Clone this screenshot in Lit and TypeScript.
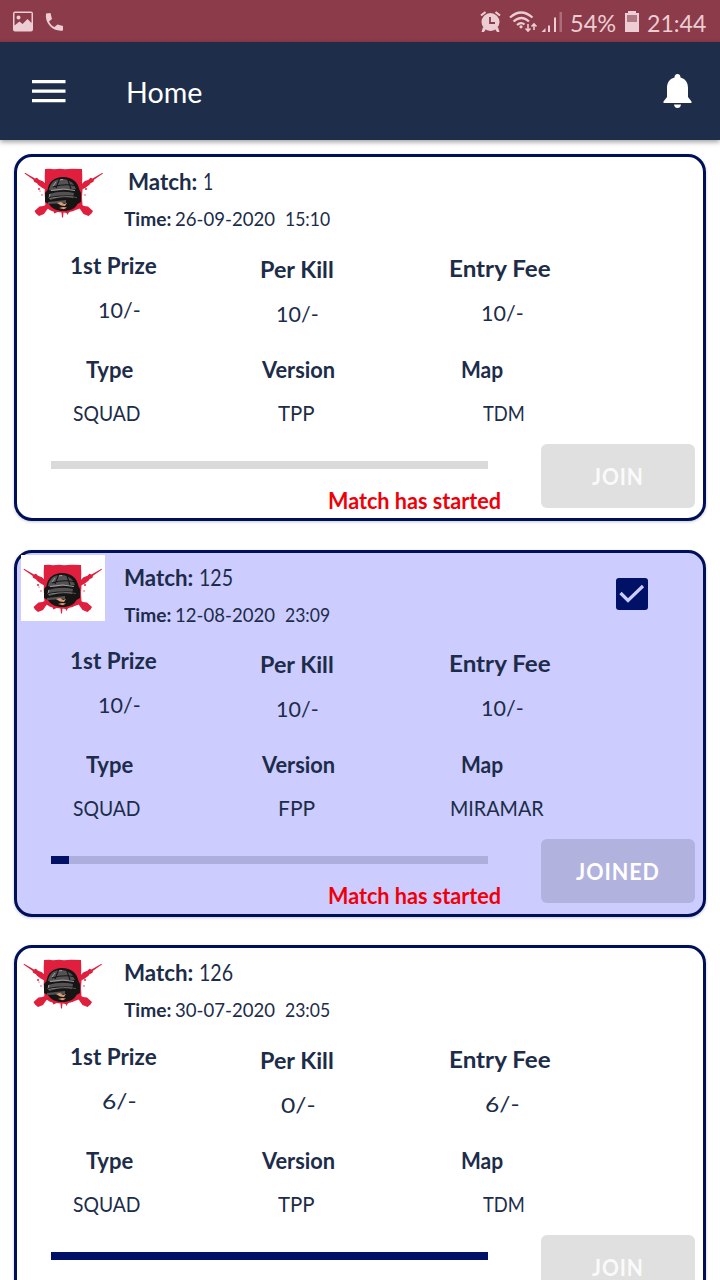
import { LitElement, html, css, svg } from "lit";
import { customElement, property } from "lit/decorators.js";
import { classMap } from "lit/directives/class-map.js";

/** A single line of text, condensed or widened to occupy a given width. */
@customElement("fit-text")
class FitText extends LitElement {
  @property({ type: Number }) w = 0;
  @property() text = "";
  static styles = css`
    :host { display: inline-block; white-space: pre; flex: none; }
    .line { display: inline-block; transform-origin: 0 50%; }
  `;
  updated() {
    const el = this.renderRoot.querySelector(".line") as HTMLElement;
    this.style.width = this.w + "px";
    el.style.transform = `scaleX(${this.w / el.offsetWidth})`;
  }
  render() {
    return html`<span class="line">${this.text}</span>`;
  }
}

const t = (text: string, w: number) => html`<fit-text .text=${text} .w=${w}></fit-text>`;

const rifle = svg`
  <path d="M2.500 14.500L3 13.800 13 19.500l2-.8 2 2 4 1.500 4 4v5l-5-2.500-4-3-1-1.500-3-1.500-.5-2zM58 45l4 2 4 .5 5 4.500-1.500 2.500-3 2.500-5-2-3.500-5-4-3z"/>`;

const logo = html`<svg class="logo" viewBox="0 0 84 66">
  <g fill="#df1f3d">
    <path d="M23 10l5-.3 4 .5 6-.5 5 .5 7-.5 10 .3.3 9-.3 6 .5 6-.5 7 .5 9-4 3-3 1-2 1-4 1-1 1-1 2-1-2-3-.5-.5 5h-1l-.5-5-4-.5-3 1.500-1-2-3-1-5-3.500-.5-8.500-.3-5 .3-9-.3-7z"/>
    ${rifle}
    <g transform="translate(83.500 0) scale(-1 1)">${rifle}</g>
    <circle cx="17" cy="30" r="1"/><circle cx="18" cy="32" r=".6"/><circle cx="64" cy="30" r="1"/>
    <circle cx="63" cy="36" r=".7"/><circle cx="65" cy="25" r=".6"/><circle cx="20" cy="36" r=".7"/>
  </g>
  <path fill="#171414" d="M41 18c9 0 15 5 16.500 13l1.500 3v9l-3.500 2c-2 4.500-7.500 7-14 7s-12-2.500-14.500-7L23 43v-9l2.500-3c1-8 7-13 15.500-13z"/>
  <path fill="#535254" d="M32 22c6-3.500 15-2.500 20 4l2 4-24 2-3-1c.5-4 2.500-7 5-9z"/>
  <path fill="#535254" d="M27 35q13-4 25-1l-1 5q-12-2-23 2zM26 43l18-2v3l-18 1z"/>
  <path fill="none" stroke="#aaa8a8" stroke-width=".9" d="M29 31.500q13-3 24 0M28 35l-1 4 15-2 13 1M34 23l-3 4M37 21l4-.5"/>
  <path fill="none" stroke="#171414" stroke-width="1.100" d="M31 28q12-4 23-1M27 38.500q14-3 28-1M38 19l-4 10M46 21l3 9"/>
  <path fill="#dc9c78" d="M35 44l4-1 3 2 3-1-2 3-4-.5zM37 49l4-1 4 .5-3 1.800z"/>
</svg>`;

interface Field { text: string; w: number; cls: string; }
interface Match {
  id: string; idW: number; date: string; time: string; fields: Field[];
  joined?: boolean; first?: boolean; progress: number; started: boolean;
}

const f = (text: string, w: number, cls: string): Field => ({ text, w, cls });
const labels1 = [f("1st Prize", 87, "b prize"), f("Per Kill", 74, "b kill"), f("Entry Fee", 102, "b fee")];
const labels2 = [f("Type", 47, "b type"), f("Version", 73, "b ver"), f("Map", 42, "b map")];
const tens = [f("10/-", 43, "v1"), f("10/-", 43, "v2"), f("10/-", 43, "v3")];

const matches: Match[] = [
  { id: "1", idW: 10, date: "26-09-2020", time: "15:10", first: true, progress: 0, started: true,
    fields: [...labels1, ...tens, ...labels2, f("SQUAD", 68, "sq"), f("TPP", 37, "pp"), f("TDM", 42, "tdm")] },
  { id: "125", idW: 34, date: "12-08-2020", time: "23:09", joined: true, progress: 4.2, started: true,
    fields: [...labels1, ...tens, ...labels2, f("SQUAD", 68, "sq"), f("FPP", 37, "pp"), f("MIRAMAR", 94, "mir")] },
  { id: "126", idW: 34, date: "30-07-2020", time: "23:05", progress: 100, started: false,
    fields: [...labels1, f("6/-", 34, "v1"), f("0/-", 34, "v2"), f("6/-", 34, "v3"), ...labels2,
      f("SQUAD", 68, "sq"), f("TPP", 37, "pp"), f("TDM", 42, "tdm")] },
];

@customElement("match-card")
class MatchCard extends LitElement {
  @property({ attribute: false }) match!: Match;
  static styles = css`
    :host { display: block; flex: none; }
    .card { box-sizing: border-box; height: 367px; border: 3.500px solid #001058; border-radius: 18px; background: #fff;
      box-shadow: 0 1px 3px rgba(0, 0, 60, .22); color: #1c2c49; display: flex; flex-direction: column; }
    .joined { background: #ccccff; }
    .head { display: flex; flex: none; height: 89.500px; box-sizing: border-box; padding: 2px 55px 0 3.500px; }
    .first .head { padding-left: 4.500px; }
    .pic { width: 84px; height: 66px; flex: none; }
    .joined .pic { background: #fff; }
    .logo { display: block; width: 84px; height: 66px; }
    .info { flex: 1; padding-left: 19.500px; font-weight: 700; }
    .first .info { padding-left: 18.500px; }
    .name { display: flex; gap: 6px; height: 44px; line-height: 44px; font-size: 23px; }
    .first .name { padding-left: 4px; }
    .when { display: flex; height: 30px; line-height: 31px; font-size: 19.500px; }
    .n { font-weight: 400; }
    .date { margin: 0 10px 0 4px; }
    .check { width: 32px; height: 32px; margin-top: 23px; flex: none; }
    .grid { display: grid; flex: none; grid-template-columns: 178.500px 200px 170px; grid-template-rows: 44px 44px 12px 44px 44px; }
    .cell { display: flex; justify-content: center; line-height: 44px; font-size: 21px; }
    .cell:nth-child(n + 4) { grid-row: 2; }
    .cell:nth-child(n + 7) { grid-row: 4; }
    .cell:nth-child(n + 10) { grid-row: 5; }
    .b { font-size: 23px; font-weight: 700; }
    .prize { padding-left: 14px; margin-top: -4px; }
    .kill { padding-left: 2px; }
    .fee { padding-left: 38px; margin-top: -1px; }
    .v1 { padding-left: 26px; margin-top: -3px; }
    .v2 { padding-left: 4px; margin-top: 1px; }
    .v3 { padding-left: 43px; }
    .type { padding-left: 7px; }
    .ver { padding-left: 5px; }
    .map { padding-left: 3px; }
    .sq, .pp { padding-left: 2px; }
    .tdm { padding-left: 47px; }
    .mir { padding-left: 33px; }
    .foot { display: flex; flex: none; justify-content: space-between; padding: 9px 8.500px 0 33.500px; }
    .left { width: 450px; padding-top: 17px; }
    .bar { width: 437px; height: 8px; background: #dadada; }
    .joined .bar { background: #aeaedc; }
    .fill { height: 8px; background: #001166; }
    .msg { display: flex; justify-content: flex-end; height: 40px; line-height: 40px; margin-top: 11px;
      font-size: 23px; font-weight: 700; color: #ef0009; }
    .btn { width: 154px; height: 64px; box-sizing: border-box; border-radius: 6px; background: #e0e0e0; color: #fafafa; line-height: 65px;
      display: flex; justify-content: center; font-size: 22.500px; font-weight: 700; letter-spacing: 1px; }
    .joined .btn { background: #b2b2df; color: #fff; }
  `;
  render() {
    const m = this.match;
    return html`<div class=${classMap({ card: true, joined: !!m.joined, first: !!m.first })}>
      <div class="head">
        <div class="pic">${logo}</div>
        <div class="info">
          <div class="name">${t("Match:", 69)}<span class="n">${t(m.id, m.idW)}</span></div>
          <div class="when">${t("Time:", 47)}<span class="n date">${t(m.date, 100)}</span><span class="n">${t(m.time, 45)}</span></div>
        </div>
        ${m.joined ? html`<svg class="check" viewBox="0 0 32 32"><rect width="32" height="32" rx="3" fill="#001166"/>
          <path d="M4.500 15l7.500 7.500L27 8" fill="none" stroke="#ccccff" stroke-width="3.200"/></svg>` : ""}
      </div>
      <div class="grid">${m.fields.map((x) => html`<div class="cell ${x.cls}">${t(x.text, x.w)}</div>`)}</div>
      <div class="foot">
        <div class="left">
          <div class="bar"><div class="fill" style="width:${m.progress}%"></div></div>
          ${m.started ? html`<div class="msg">${t("Match has started", 173)}</div>` : ""}
        </div>
        <div class="btn">${m.joined ? t("JOINED", 84) : t("JOIN", 52)}</div>
      </div>
    </div>`;
  }
}

@customElement("app-root")
class AppRoot extends LitElement {
  static styles = css`
    :host { display: block; width: 720px; height: 1280px; overflow: hidden; background: #fff; font-family: Lato, sans-serif; }
    .status { height: 42px; box-sizing: border-box; background: #8b3b4a; color: #ebcdd3; display: flex; justify-content: space-between;
      padding: 0 14px 0 12px; font-size: 23.500px; line-height: 47px; }
    .icons { display: block; height: 42px; flex: none; }
    .right { display: flex; }
    .batt { margin: 0 7px 0 8px; }
    .pct { margin-left: 7px; }
    .bar { height: 98px; box-sizing: border-box; background: #1e2e4a; border-top: 1px solid #292943; color: #fff; display: flex; align-items: center;
      padding: 0 28px 2px 32px; box-shadow: 0 2px 5px rgba(0, 0, 0, .38); }
    .menu { width: 34px; height: 24px; }
    .title { flex: 1; padding: 2px 0 0 60px; font-size: 29px; line-height: 40px; }
    .bell { width: 29px; height: 36px; }
    .list { display: flex; flex-direction: column; gap: 28.500px; padding: 14px 14px 0; }
  `;
  render() {
    return html`
      <div class="status">
        <svg class="icons" width="54" height="42" viewBox="12 0 54 42" fill="#ebcdd3">
          <path fill-rule="evenodd" d="M15 11.500h16a2 2 0 0 1 2 2v16a2 2 0 0 1-2 2H15a2 2 0 0 1-2-2v-16a2 2 0 0 1 2-2zM14.500 13v12.500l5-4 3 2.500 5-5 4 4V13zM18.500 15.500a2 2 0 1 1 0 4 2 2 0 0 1 0-4z"/>
          <path d="M46 13.500l4.500-.5 1.500 6-3 2.500c1.500 3 3 4.500 5.500 5.500l3-2.500 5.500 1.500v4.500c-9 1.500-18.500-6-17-17z"/>
        </svg>
        <div class="right">
          <svg class="icons" width="84" height="42" viewBox="480 0 84 42">
            <g fill="#ebcdd3"><circle cx="491.500" cy="22" r="9"/><path d="M484 27l3 2-2 3h-2.500zM499 27l-3 2 2 3h2.500z"/></g>
            <path d="M482 15.500l4.500-3.500M501 15.500l-4.500-3.500" stroke="#ebcdd3" stroke-width="2.200"/>
            <path d="M491 17v6h5" fill="none" stroke="#8b3b4a" stroke-width="1.800"/>
            <g fill="none" stroke="#ebcdd3" stroke-width="2.200"><path d="M511 17.500q11-10 22.500 0M514.500 21.500q8-7 15.500 0M518 25q4-3.500 7.500-.5"/>
              <path stroke-width="1.600" d="M529 24v7M526.500 28.500l2.500 2.500 2.500-2.500M535 30v-6M532.500 26.500l2.500-2.500 2.500 2.500"/></g>
            <circle cx="522" cy="26.800" r="1.600" fill="#ebcdd3"/>
            <g fill="#ebcdd3"><path d="M542.500 32h4v-4z"/><path d="M549 25.500h2v6.500h-2z"/>
              <path d="M555 17.500h2v14.500h-2z"/><path opacity=".35" d="M560.500 12h2.500v20h-2.500z"/></g>
          </svg>
          <span class="pct">${t("54%", 46)}</span>
          <svg class="icons batt" width="16" height="42" viewBox="625 0 16 42">
            <path fill="#ebcdd3" d="M629 11h8v2h3v19h-14V13h3z"/><path fill="#b07882" d="M628 15h10v7h-10z"/>
          </svg>
          ${t("21:44", 59)}
        </div>
      </div>
      <div class="bar">
        <svg class="menu" viewBox="0 0 34 24" fill="#fff"><path d="M0 1h33.500v3.200H0zM0 10.500h33.500v3.200H0zM0 20h33.500v3.200H0z"/></svg>
        <div class="title">${t("Home", 76)}</div>
        <svg class="bell" viewBox="0 0 29 36" fill="#fff"><path d="M11.500 4.500Q11.500 1 14.500 1t3 3.500C23 6 25 10 25 15v9l3.500 4.500V30H.5v-1.500L4 24v-9C4 10 6 6 11.500 4.500zM11 31.500h7Q17.500 35 14.500 35T11 31.500z"/></svg>
      </div>
      <div class="list">${matches.map((m) => html`<match-card .match=${m}></match-card>`)}</div>
    `;
  }
}
